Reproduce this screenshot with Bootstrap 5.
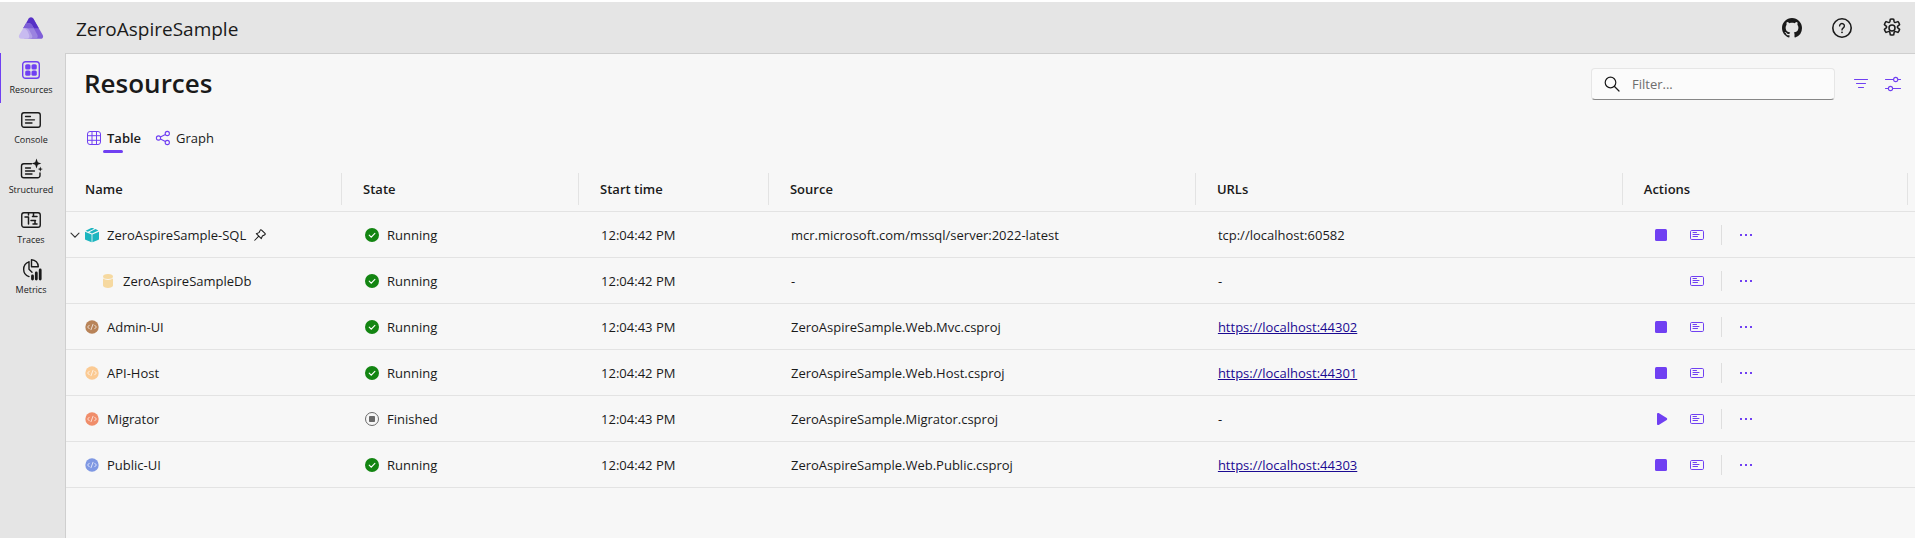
<!DOCTYPE html>
<html lang="en">
<head>
<meta charset="utf-8">
<meta name="viewport" content="width=device-width, initial-scale=1">
<title>ZeroAspireSample resources</title>
<link href="https://cdn.jsdelivr.net/npm/bootstrap@5.3.0/dist/css/bootstrap.min.css" rel="stylesheet">
<style>
  :root { --accent: #7040f2; --ink: #1a1a1a; --line: #e3e3e3; --chrome: #e5e5e5; --edge: #cfcfcf; }
  body { font-family: "Open Sans", "Noto Sans", sans-serif; font-size: 13px; line-height: 20px; color: var(--ink); background: #fff; padding-top: 2px; }
  svg { display: block; flex: none; }
  .app-shell { min-height: calc(100vh - 2px); background: var(--chrome); }
  .app-header { height: 51px; padding-right: 8px; }
  .head-nav { gap: 20px; }
  .logo-box { width: 65px; padding-left: 18px; }
  .app-name { font-size: 19px; line-height: 28px; padding: 2px 0 0 11px; }
  .icon-btn { border: 0; background: none; padding: 0; color: inherit; display: flex; align-items: center; justify-content: center; }
  .head-btn { width: 30px; height: 30px; }
  .side-rail { width: 65px; flex: none; }
  .rail-link { height: 50px; padding: 7px 4px 0 0; border-left: 1px solid transparent; color: var(--ink); font-size: 9px; line-height: 14px; text-decoration: none; display: flex; flex-direction: column; align-items: center; gap: 3px; }
  .rail-link.active { border-color: var(--accent); }
  .rail-link.active svg { color: var(--accent); }
  .page-main { background: #f7f7f7; border: solid var(--edge); border-width: 1px 0 0 1px; min-width: 0; }
  .page-bar { padding: 10px 7px 0 18px; }
  .page-title { font-size: 26px; line-height: 38px; font-weight: 600; }
  .accent { color: var(--accent); }
  .filter-box { width: 244px; height: 32px; padding: 0 12px; gap: 12px; margin: 2px 11px 0 0; border: 1px solid #e6e6e6; border-bottom-color: #868686; border-radius: 4px; background: #fbfbfb; }
  .filter-box input { border: 0; outline: 0; background: none; padding: 0; width: 100%; min-width: 0; font-size: 13px; line-height: 20px; color: var(--ink); }
  .filter-box input::placeholder { color: #6e6e6e; opacity: 1; }
  .bar-tools { gap: 2px; padding-top: 2px; }
  .tab-row { padding: 26px 0 0 20px; gap: 12px; }
  .tab-btn { border: 0; background: none; padding: 0 2px 5px 0; gap: 5px; color: inherit; position: relative; }
  .tab-btn.active { font-weight: 600; }
  .tab-btn.active::after { content: ""; position: absolute; left: 50%; margin-left: -12px; bottom: 0; width: 20px; height: 3px; border-radius: 2px; background: var(--accent); }
  .res-table { table-layout: fixed; width: 100%; border-collapse: separate; border-spacing: 0; margin-top: 14px; }
  .res-table th { height: 45px; padding: 0; font-weight: 600; border-bottom: 1px solid var(--line); }
  .res-table th > div { height: 32px; border-right: 1px solid var(--line); padding: 6px 0 6px 21px; }
  .res-table th:first-child > div { padding-left: 19px; }
  .res-table th:last-child > div { margin-right: 7px; }
  .res-table td { height: 46px; padding: 0 0 0 22px; border-bottom: 1px solid var(--line); white-space: nowrap; overflow: hidden; }
  .res-table td > div { gap: 7px; }
  .res-table td.cell-name { padding-left: 18px; }
  .res-table td.cell-parent { padding-left: 2px; }
  .res-table td.cell-child { padding-left: 34px; }
  .res-table td.cell-actions { padding-left: 20px; }
  .res-table td.cell-actions > div { gap: 0; }
  .chevron { margin-right: -5px; width: 14px; }
  .act-btn { width: 36px; height: 30px; color: var(--accent); }
  .act-rule { width: 1px; height: 20px; margin: 0 6px; background: #dedede; }
  .url-link { color: #1b0a92; text-decoration: underline; }
</style>
</head>
<body>
<svg width="0" height="0" class="position-absolute" aria-hidden="true">
  <symbol id="i-console" viewBox="0 0 20 20"><rect x=".75" y="2.75" width="18.5" height="14.5" rx="2.2" fill="none" stroke="currentColor" stroke-width="1.4"/><path d="M4.500 6.500h5M4.500 9.800h9M4.500 13h6.500" stroke="currentColor" stroke-width="1.3" stroke-linecap="round"/></symbol>
  <symbol id="i-log" viewBox="0 0 16 16"><rect x="1.500" y="3.500" width="13" height="9" rx="1.200" fill="none" stroke="currentColor"/><path d="M4 5.500h3.500M4 7.500h6M4 9.500h4.500" stroke="currentColor" stroke-width="1" stroke-linecap="round"/></symbol>
  <symbol id="i-stop" viewBox="0 0 16 16"><rect x="2" y="2" width="12" height="12" rx="1.500" fill="currentColor"/></symbol>
  <symbol id="i-play" viewBox="0 0 16 16"><path d="M4 3v10c0 .9 1 1.400 1.700.9l8-5c.7-.4.7-1.400 0-1.800l-8-5C5 1.600 4 2.100 4 3z" fill="currentColor"/></symbol>
  <symbol id="i-more" viewBox="0 0 16 16"><path d="M2 7h2v2H2zM7 7h2v2H7zM12 7h2v2h-2z" fill="currentColor"/></symbol>
  <symbol id="i-ok" viewBox="0 0 16 16"><circle cx="8" cy="8" r="7" fill="#138512"/><path d="M5.200 8.200l2 2 3.700-3.800" fill="none" stroke="#fff" stroke-width="1.100" stroke-linecap="round"/></symbol>
  <symbol id="i-done" viewBox="0 0 16 16"><circle cx="8" cy="8" r="6.500" fill="none" stroke="#6a6a6a"/><rect x="5" y="5" width="6" height="6" rx=".8" fill="#6a6a6a"/></symbol>
  <symbol id="i-code" viewBox="0 0 16 16"><circle cx="8" cy="8" r="6.700" fill="currentColor"/><path d="M5.300 6.200L3.600 8l1.700 1.800M10.700 6.200L12.400 8l-1.700 1.800M9 5.300L7 10.700" fill="none" stroke="#fff" stroke-opacity=".8" stroke-width=".9" stroke-linecap="round"/></symbol>
</svg>

<div class="app-shell d-flex flex-column">
  <header class="app-header d-flex align-items-center">
    <div class="logo-box">
      <svg width="26" height="24" viewBox="0 0 26 24" role="img" aria-label="Aspire">
        <path d="M10.600 2.800a2.800 2.800 0 0 1 4.800 0L24.700 19c1 1.800 0 3.800-2.100 3.800H12z" fill="#7f5fd8"/>
        <path d="M10.600 2.800a2.800 2.800 0 0 1 4.800 0l5.400 9.400H5.200z" fill="#5630c6"/>
        <path d="M8 7.300c3.200-.8 5.400.5 6.600 2.700l4.600 8.500c1.100 2.200.3 4.300-2 4.300H7z" fill="#9b83e0"/>
        <path d="M8 7.300c3.200-.8 5.400.5 6.600 2.700l1.200 2.200H5.200z" fill="#7c5ed6"/>
        <path d="M5.200 12.200c3.400-.6 5.300.6 6.500 2.800l2.300 4.200c.9 1.900 0 3.600-1.900 3.600H6z" fill="#b3a1e8"/>
        <path d="M5.200 12.200c2.600.3 3.700 1.700 4.600 3.600l1.300 3c.8 2.200-.1 4-2.100 4H3.400c-2.200 0-3.200-2-2.200-3.800z" fill="#c8bbf0"/>
      </svg>
    </div>
    <div class="app-name flex-grow-1">ZeroAspireSample</div>
    <nav class="head-nav d-flex" aria-label="Application">
      <button class="icon-btn head-btn" aria-label="GitHub"><svg width="20" height="20" viewBox="0 0 16 16"><path fill="currentColor" d="M8 0C3.580 0 0 3.580 0 8c0 3.540 2.290 6.530 5.470 7.590.4.070.55-.17.55-.38 0-.19-.01-.82-.01-1.490-2.010.37-2.530-.49-2.690-.94-.09-.23-.48-.94-.82-1.130-.28-.15-.68-.52-.01-.53.63-.01 1.080.58 1.230.82.72 1.210 1.870.87 2.330.66.070-.52.28-.87.51-1.070-1.780-.2-3.640-.89-3.640-3.950 0-.87.31-1.590.82-2.150-.08-.2-.36-1.020.08-2.120 0 0 .67-.21 2.200.82.64-.18 1.320-.27 2-.27s1.360.09 2 .27c1.530-1.040 2.200-.82 2.200-.82.44 1.100.16 1.920.08 2.120.51.56.82 1.270.82 2.150 0 3.070-1.870 3.750-3.650 3.950.29.25.54.73.54 1.480 0 1.070-.01 1.930-.01 2.200 0 .21.15.46.55.38A8.010 8.010 0 0 0 16 8c0-4.420-3.580-8-8-8z"/></svg></button>
      <button class="icon-btn head-btn" aria-label="Help"><svg width="20" height="20" viewBox="0 0 20 20" fill="none" stroke="currentColor"><circle cx="10" cy="10" r="9.200" stroke-width="1.600"/><path d="M7.600 7.900a2.400 2.400 0 1 1 3.700 2c-.8.6-1.300 1-1.300 2" stroke-width="1.400" stroke-linecap="round"/><circle cx="10" cy="14.300" r=".9" fill="currentColor" stroke="none"/></svg></button>
      <button class="icon-btn head-btn" aria-label="Settings"><svg width="20" height="20" viewBox="0 0 20 20" fill="none" stroke="currentColor" stroke-width="1.500" stroke-linejoin="round"><circle cx="10" cy="10" r="3"/><path d="M8.300 1.200a9 9 0 0 1 3.400 0l.4 2.300c.2.700.9 1.100 1.600.9l2.200-.8a9 9 0 0 1 1.700 3l-1.800 1.500c-.6.500-.6 1.300 0 1.800l1.800 1.500a9 9 0 0 1-1.700 3l-2.200-.8c-.7-.2-1.400.2-1.600.9l-.4 2.300a9 9 0 0 1-3.400 0l-.4-2.300c-.2-.7-.9-1.100-1.600-.9l-2.200.8a9 9 0 0 1-1.700-3l1.800-1.500c.6-.5.600-1.300 0-1.800L2.400 6.600a9 9 0 0 1 1.700-3l2.200.8c.7.2 1.400-.2 1.600-.9z"/></svg></button>
    </nav>
  </header>

  <div class="d-flex flex-grow-1">
    <nav class="side-rail" aria-label="Pages">
      <a class="rail-link active" href="#resources" aria-current="page"><svg width="20" height="20" viewBox="0 0 20 20"><rect x="1.700" y="1.700" width="16.600" height="16.600" rx="2.800" fill="none" stroke="currentColor" stroke-width="1.400"/><g fill="currentColor"><rect x="4.200" y="4.200" width="5.300" height="5.300" rx="1.600"/><rect x="10.500" y="4.200" width="5.300" height="5.300" rx="1.600"/><rect x="4.200" y="10.500" width="5.300" height="5.300" rx="1.600"/><rect x="10.500" y="10.500" width="5.300" height="5.300" rx="1.600"/></g></svg>Resources</a>
      <a class="rail-link" href="#console"><svg width="20" height="20"><use href="#i-console"/></svg>Console</a>
      <a class="rail-link" href="#structured"><svg width="22" height="20" viewBox="0 0 22 20" overflow="visible"><path d="M11.500 3.700H3.800a2.300 2.300 0 0 0-2.300 2.300v9.500a2.300 2.300 0 0 0 2.300 2.300h13.900a2.300 2.300 0 0 0 2.300-2.300V13" fill="none" stroke="currentColor" stroke-width="1.400" stroke-linecap="round"/><path d="M5.500 8h5M5.500 11h9M5.500 14h6.500" stroke="currentColor" stroke-width="1.300" stroke-linecap="round"/><path d="M16.500-1.500l1.300 3.700 3.500 1.300-3.500 1.300-1.300 3.700-1.300-3.700-3.500-1.300 3.500-1.300zM20.300 6.500l.7 1.900 1.900.7-1.900.7-.7 1.900-.7-1.900-1.900-.7 1.900-.7z" fill="currentColor"/></svg>Structured</a>
      <a class="rail-link" href="#traces"><svg width="20" height="20" viewBox="0 0 20 20" fill="none" stroke="currentColor" stroke-width="1.400" stroke-linecap="round"><rect x=".75" y="2.750" width="18.500" height="14.500" rx="2.200"/><path d="M4 7h3.500M7.500 7v7M11.500 6.500H16M12.500 3v3.500M10 10.500h4.500M14 10.500v3M12 14h4M7.500 3v2" stroke-width="1.500"/></svg>Traces</a>
      <a class="rail-link" href="#metrics"><svg width="20" height="20" viewBox="0 0 20 20" overflow="visible"><g fill="none" stroke="currentColor" stroke-width="1.400" stroke-linecap="round" stroke-linejoin="round"><path d="M8 1.800A7.800 7.800 0 0 0 8 16.600M8 1.800v7.400l3 3"/><path d="M10.500-.3v7.100h6.800a7 7 0 0 0-6.800-7.100z"/></g><path d="M11.500 16v3M15.300 13v6M19.200 10v9" stroke="currentColor" stroke-width="2.800" stroke-linecap="round"/></svg>Metrics</a>
    </nav>

    <main class="page-main flex-grow-1">
      <div class="page-bar d-flex align-items-center">
        <h1 class="page-title mb-0 me-auto">Resources</h1>
        <label class="filter-box d-flex align-items-center">
          <svg width="16" height="16" viewBox="0 0 16 16" fill="none" stroke="currentColor" stroke-width="1.200" stroke-linecap="round"><circle cx="6.500" cy="6.500" r="5.300"/><path d="M10.500 10.500l4.500 4.500"/></svg>
          <input type="search" placeholder="Filter..." aria-label="Filter">
        </label>
        <div class="bar-tools d-flex">
          <button class="icon-btn head-btn accent" aria-label="Filters"><svg width="16" height="16" viewBox="0 0 16 16"><path d="M1.500 3.500h13M3.500 7.500h9M5.500 11.500h5" stroke="currentColor" stroke-width="1.100" stroke-linecap="round"/></svg></button>
          <button class="icon-btn head-btn accent" aria-label="View options"><svg width="18" height="18" viewBox="0 0 18 18" fill="none" stroke="currentColor" stroke-width="1.100" stroke-linecap="round"><path d="M1.500 4.500h8M14 4.500h2.500M1.500 13.500H4M9 13.500h7.500"/><circle cx="11.700" cy="4.500" r="2.100"/><circle cx="6.500" cy="13.500" r="2.100"/></svg></button>
        </div>
      </div>

      <div class="tab-row d-flex" role="tablist">
        <button class="tab-btn active d-flex align-items-center" role="tab" aria-selected="true"><svg class="accent" width="16" height="16" viewBox="0 0 16 16" fill="none" stroke="currentColor"><rect x="1.500" y="1.500" width="13" height="13" rx="2.500"/><path d="M6 1.500v13M10.500 1.500v13M1.500 5.700h13M1.500 10.300h13"/></svg>Table</button>
        <button class="tab-btn d-flex align-items-center" role="tab" aria-selected="false"><svg class="accent" width="16" height="16" viewBox="0 0 16 16" fill="none" stroke="currentColor" stroke-width="1.100"><circle cx="3.500" cy="8" r="2.100"/><circle cx="12.300" cy="3.500" r="2.100"/><circle cx="12.300" cy="12.500" r="2.100"/><path d="M5.400 7l5-2.500M5.400 9l5 2.500"/></svg>Graph</button>
      </div>

      <table class="res-table">
        <colgroup><col style="width:14.930%"><col style="width:12.820%"><col style="width:10.270%"><col style="width:23.090%"><col style="width:23.090%"><col></colgroup>
        <thead>
          <tr><th scope="col"><div>Name</div></th><th scope="col"><div>State</div></th><th scope="col"><div>Start time</div></th><th scope="col"><div>Source</div></th><th scope="col"><div>URLs</div></th><th scope="col"><div>Actions</div></th></tr>
        </thead>
        <tbody>
          <tr>
            <td class="cell-name cell-parent"><div class="d-flex align-items-center"><button class="icon-btn chevron" aria-label="Collapse"><svg width="14" height="14" viewBox="0 0 14 14"><path d="M3 5.200l4 4 4-4" fill="none" stroke="#333" stroke-width="1.100" stroke-linecap="round"/></svg></button><svg width="16" height="16" viewBox="0 0 16 16"><path d="M1 4.800l6.600 2.600v7.800L2 13.100a1.500 1.500 0 0 1-1-1.400zM15 4.800L8.400 7.400v7.800l5.600-2.100a1.500 1.500 0 0 0 1-1.400z" fill="#1cb5bf"/><path d="M7.200 1.100a2 2 0 0 1 1.600 0l1.400.6L3.800 4.800 1.600 3.700zM11.500 2.100l2.900 1.300-6.400 3-2.700-1.100z" fill="#1cb5bf"/></svg>ZeroAspireSample-SQL<svg width="14" height="14" viewBox="0 0 16 16" fill="none" stroke="currentColor" stroke-width="1.200" stroke-linejoin="round" stroke-linecap="round"><path d="M9.800 2.300l3.900 3.900c.5.500.4 1.200-.2 1.500L10.700 9.200l-1.200 3L3.800 6.500l3-1.200L8.300 2.500c.3-.6 1-.7 1.500-.2zM6.600 9.400L2 14"/></svg></div></td>
            <td><div class="d-flex align-items-center"><svg width="16" height="16"><use href="#i-ok"/></svg>Running</div></td>
            <td>12:04:42 PM</td><td>mcr.microsoft.com/mssql/server:2022-latest</td><td>tcp://localhost:60582</td>
            <td class="cell-actions"><div class="d-flex align-items-center"><button class="icon-btn act-btn" aria-label="Stop"><svg width="16" height="16"><use href="#i-stop"/></svg></button><button class="icon-btn act-btn" aria-label="Console logs"><svg width="16" height="16"><use href="#i-log"/></svg></button><span class="act-rule"></span><button class="icon-btn act-btn" aria-label="More"><svg width="16" height="16"><use href="#i-more"/></svg></button></div></td>
          </tr>
          <tr>
            <td class="cell-name cell-child"><div class="d-flex align-items-center"><svg width="16" height="16" viewBox="0 0 16 16" fill="#f6d9a0"><ellipse cx="8" cy="3.500" rx="5" ry="2.500"/><path d="M3 5.500c2.500 1.900 7.500 1.900 10 0v7c0 3.200-10 3.200-10 0z"/></svg>ZeroAspireSampleDb</div></td>
            <td><div class="d-flex align-items-center"><svg width="16" height="16"><use href="#i-ok"/></svg>Running</div></td>
            <td>12:04:42 PM</td><td>-</td><td>-</td>
            <td class="cell-actions"><div class="d-flex align-items-center"><span class="act-btn"></span><button class="icon-btn act-btn" aria-label="Console logs"><svg width="16" height="16"><use href="#i-log"/></svg></button><span class="act-rule"></span><button class="icon-btn act-btn" aria-label="More"><svg width="16" height="16"><use href="#i-more"/></svg></button></div></td>
          </tr>
          <tr>
            <td class="cell-name"><div class="d-flex align-items-center"><svg width="16" height="16" color="#b88358"><use href="#i-code"/></svg>Admin-UI</div></td>
            <td><div class="d-flex align-items-center"><svg width="16" height="16"><use href="#i-ok"/></svg>Running</div></td>
            <td>12:04:43 PM</td><td>ZeroAspireSample.Web.Mvc.csproj</td><td><a class="url-link" href="https://localhost:44302">https://localhost:44302</a></td>
            <td class="cell-actions"><div class="d-flex align-items-center"><button class="icon-btn act-btn" aria-label="Stop"><svg width="16" height="16"><use href="#i-stop"/></svg></button><button class="icon-btn act-btn" aria-label="Console logs"><svg width="16" height="16"><use href="#i-log"/></svg></button><span class="act-rule"></span><button class="icon-btn act-btn" aria-label="More"><svg width="16" height="16"><use href="#i-more"/></svg></button></div></td>
          </tr>
          <tr>
            <td class="cell-name"><div class="d-flex align-items-center"><svg width="16" height="16" color="#fbca93"><use href="#i-code"/></svg>API-Host</div></td>
            <td><div class="d-flex align-items-center"><svg width="16" height="16"><use href="#i-ok"/></svg>Running</div></td>
            <td>12:04:42 PM</td><td>ZeroAspireSample.Web.Host.csproj</td><td><a class="url-link" href="https://localhost:44301">https://localhost:44301</a></td>
            <td class="cell-actions"><div class="d-flex align-items-center"><button class="icon-btn act-btn" aria-label="Stop"><svg width="16" height="16"><use href="#i-stop"/></svg></button><button class="icon-btn act-btn" aria-label="Console logs"><svg width="16" height="16"><use href="#i-log"/></svg></button><span class="act-rule"></span><button class="icon-btn act-btn" aria-label="More"><svg width="16" height="16"><use href="#i-more"/></svg></button></div></td>
          </tr>
          <tr>
            <td class="cell-name"><div class="d-flex align-items-center"><svg width="16" height="16" color="#f08d6a"><use href="#i-code"/></svg>Migrator</div></td>
            <td><div class="d-flex align-items-center"><svg width="16" height="16"><use href="#i-done"/></svg>Finished</div></td>
            <td>12:04:43 PM</td><td>ZeroAspireSample.Migrator.csproj</td><td>-</td>
            <td class="cell-actions"><div class="d-flex align-items-center"><button class="icon-btn act-btn" aria-label="Start"><svg width="16" height="16"><use href="#i-play"/></svg></button><button class="icon-btn act-btn" aria-label="Console logs"><svg width="16" height="16"><use href="#i-log"/></svg></button><span class="act-rule"></span><button class="icon-btn act-btn" aria-label="More"><svg width="16" height="16"><use href="#i-more"/></svg></button></div></td>
          </tr>
          <tr>
            <td class="cell-name"><div class="d-flex align-items-center"><svg width="16" height="16" color="#7f98e3"><use href="#i-code"/></svg>Public-UI</div></td>
            <td><div class="d-flex align-items-center"><svg width="16" height="16"><use href="#i-ok"/></svg>Running</div></td>
            <td>12:04:42 PM</td><td>ZeroAspireSample.Web.Public.csproj</td><td><a class="url-link" href="https://localhost:44303">https://localhost:44303</a></td>
            <td class="cell-actions"><div class="d-flex align-items-center"><button class="icon-btn act-btn" aria-label="Stop"><svg width="16" height="16"><use href="#i-stop"/></svg></button><button class="icon-btn act-btn" aria-label="Console logs"><svg width="16" height="16"><use href="#i-log"/></svg></button><span class="act-rule"></span><button class="icon-btn act-btn" aria-label="More"><svg width="16" height="16"><use href="#i-more"/></svg></button></div></td>
          </tr>
        </tbody>
      </table>
    </main>
  </div>
</div>
<script src="https://cdn.jsdelivr.net/npm/bootstrap@5.3.0/dist/js/bootstrap.bundle.min.js"></script>
</body>
</html>
